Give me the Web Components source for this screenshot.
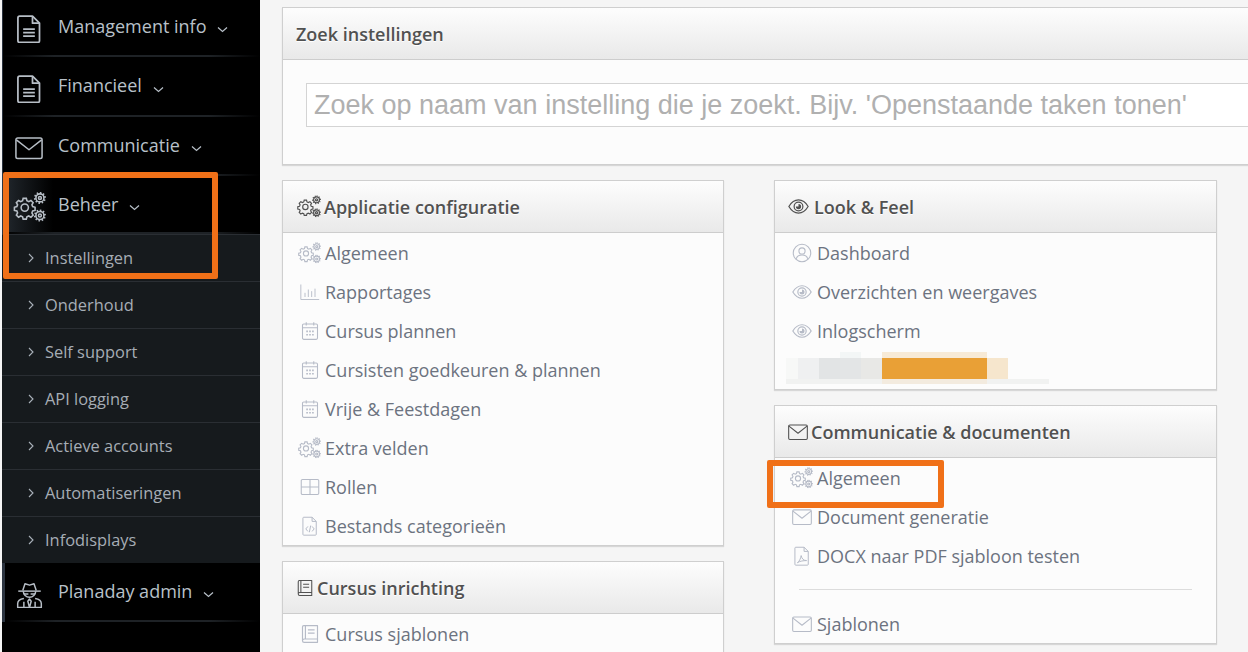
<!DOCTYPE html>
<html><head><meta charset="utf-8">
<style>
html,body{margin:0;padding:0;width:1248px;height:652px;overflow:hidden;background:#f5f5f5;font-family:"Open Sans",sans-serif}
</style></head><body>
<app-shell></app-shell>
<script>
const ICONS={
gears:`<g fill="none" stroke="currentColor" stroke-width="1.300"><path d="M9.200 5.400h2.600l.5 2 1.500.7 1.800-1 1.800 1.800-1 1.800.6 1.500 2 .5v2.600l-2 .5-.6 1.500 1 1.800-1.800 1.800-1.800-1-1.500.6-.5 2H9.200l-.5-2-1.500-.6-1.800 1-1.800-1.800 1-1.800-.6-1.500-2-.5v-2.600l2-.5.6-1.500-1-1.800 1.800-1.800 1.800 1 1.500-.7z"/><circle cx="10.500" cy="13" r="3"/><circle cx="23" cy="5" r="3.300"/><circle cx="23" cy="5" r="1.200"/><circle cx="23" cy="19.500" r="3.300"/><circle cx="23" cy="19.500" r="1.200"/><path stroke-dasharray="1.200 1.400" stroke-width="1.500" d="M23 .8a4.200 4.200 0 1 1-.01 0zM23 15.300a4.200 4.200 0 1 1-.01 0z"/></g>`,
doc:`<g fill="none" stroke="currentColor" stroke-width="1.500" stroke-linejoin="round"><path d="M4 1h11l6 6v15a1.500 1.500 0 0 1-1.500 1.500h-15.500A1.500 1.500 0 0 1 2.500 22V2.500A1.500 1.500 0 0 1 4 1z"/><path d="M15 1v6h6"/><path d="M7 12h10M7 15h10M7 18h10"/></g>`,
mail:`<g fill="none" stroke="currentColor" stroke-width="1.300" stroke-linejoin="round"><rect x=".8" y="3.500" width="22.400" height="17.500" rx="1.500"/><path d="M1.200 5l10.800 8.500L22.800 5"/></g>`,
spy:`<g fill="none" stroke="currentColor" stroke-width="1.300" stroke-linejoin="round"><path d="M6 8.500l2-6 4 1.200L16 2.500l2 6"/><path d="M2 9h20"/><path d="M6.500 9a5.500 5.500 0 0 0 11 0"/><path d="M7 11.500h4M13 11.500h4"/><path d="M7 15.500c-3 .5-5.500 2-5.500 4.500v3.500h21V20c0-2.500-2.500-4-5.500-4.500"/><path d="M12 16l-1.500 2 1.500 5.500 1.500-5.500z"/><path d="M7 18.500v5M17 18.500v5"/></g>`,
bars:`<g fill="none" stroke="currentColor" stroke-width="1.100"><path d="M1 3v18h22M6 18v-5M10 18V9M14 18v-7M18 18V8"/></g>`,
cal:`<g fill="none" stroke="currentColor" stroke-width="1.300"><rect x="3" y="3.500" width="18" height="18.500" rx="1.500"/><path d="M3 8h18M7.500 1.500v4M16.500 1.500v4"/><path stroke-width="2" stroke-dasharray="2 1.500" d="M7.500 12.500h9M7.500 16.500h9"/></g>`,
grid:`<g fill="none" stroke="currentColor" stroke-width="1.300"><rect x="1.500" y="3" width="21" height="18" rx="1.500"/><path d="M12 3v18M1.500 12h21"/></g>`,
code:`<g fill="none" stroke="currentColor" stroke-width="1.200" stroke-linejoin="round"><path d="M4.500 1.500h10l5 5V22a1 1 0 0 1-1 1h-14a1 1 0 0 1-1-1V2.500a1 1 0 0 1 1-1z"/><path d="M14.500 1.500v5h5M9.500 12.500l-2.500 3 2.500 3M14.500 12.500l2.500 3-2.500 3M12.800 11.500l-1.600 8"/></g>`,
pdf:`<g fill="none" stroke="currentColor" stroke-width="1.200" stroke-linejoin="round"><path d="M4.500 1.500h10l5 5V22a1 1 0 0 1-1 1h-14a1 1 0 0 1-1-1V2.500a1 1 0 0 1 1-1z"/><path d="M14.500 1.500v5h5M6.500 20c2-1 4-5 4.500-8.500.8 4 3 6 6.500 6-3.500 0-8 .5-11 2.500z"/></g>`,
book:`<g fill="none" stroke="currentColor" stroke-width="1.400" stroke-linejoin="round"><path d="M3 20V3.500a1.500 1.500 0 0 1 1.500-1.500H21v16H5a2 2 0 0 0-2 2 2 2 0 0 0 2 2h16v-4"/><path d="M6.500 2v16M9.500 7h8M9.500 11h8"/></g>`,
eye:`<g fill="none" stroke="currentColor" stroke-width="1.400"><path d="M1 12c3-5 7-7.500 11-7.500S20 7 23 12c-3 5-7 7.500-11 7.500S4 17 1 12z"/><circle cx="12" cy="12" r="5"/><path fill="currentColor" stroke="none" d="M12 9a3 3 0 1 1-3 3h3z"/></g>`,
user:`<g fill="none" stroke="currentColor" stroke-width="1.300"><circle cx="12" cy="12" r="10.500"/><circle cx="12" cy="9.500" r="3.700"/><path d="M5 19c1-3 3.500-4.500 7-4.500s6 1.500 7 4.500"/></g>`
};
const icon=(n,w=24,vb='0 0 24 24')=>`<svg viewBox="${vb}" width="${w}" height="${w}" aria-hidden="true">${ICONS[n]}</svg>`;
const GV='0 0 28 25';

class NavItem extends HTMLElement{
  constructor(){super();const s=this.attachShadow({mode:'open'});
    const n=this.getAttribute('icon'),sz=+(this.getAttribute('size')||28),vb=n==='gears'?GV:'0 0 24 24';
    const glow=this.hasAttribute('glow')?'background:linear-gradient(90deg,#22282e,#000 50px);':'';
    const edge=this.getAttribute('edge')||'1px';
    s.innerHTML=`<style>
    :host{display:flex;align-items:center;height:59px;box-sizing:border-box;background:#000;color:#b8c0c9;position:relative;${glow}border-left:${edge} solid #2c3440}
    :host::after{content:"";position:absolute;left:0;right:0;bottom:0;height:2px;background:linear-gradient(90deg,#000,#1e2226 20%,#1e2226 80%,#000)}
    .i{width:52px;margin-right:3px;flex:none;display:flex;justify-content:center;margin-left:calc(1px - ${edge});padding-top:3px;color:#b7bec6}
    .t{font-size:18px;position:relative;top:-2px}
    svg.c{margin-left:11px;position:relative;top:2px}
    </style><span class="i">${icon(n,sz,vb)}</span><span class="t"><slot></slot></span><svg class="c" width="11" height="7" viewBox="0 0 11 7"><path d="M1 1.500l4.500 4 4.500-4" fill="none" stroke="#b8c0c9" stroke-width="1.200"/></svg>`;}
}
class NavSub extends HTMLElement{
  constructor(){super();this.attachShadow({mode:'open'}).innerHTML=`<style>
    :host{display:flex;align-items:center;height:47px;box-sizing:border-box;background:#161a1d;border-top:1px solid #2a2e33;color:#a6adb5;font-size:16.400px}
    svg{margin:0 11px 0 26px}
    span{position:relative;top:-1px}
    </style><svg width="6" height="10" viewBox="0 0 6 10"><path d="M1 1l4 4-4 4" fill="none" stroke="#a9b1ba" stroke-width="1.100"/></svg><span><slot></slot></span>`;}
}
class SideBar extends HTMLElement{
  constructor(){super();this.attachShadow({mode:'open'}).innerHTML=`<style>
    :host{display:block;width:258px;height:652px;margin-left:2px;background:#000;flex:none;overflow:hidden}
    .w{margin-top:-2px}
    </style><div class="w"><slot></slot></div>`;}
}
class SetPanel extends HTMLElement{
  constructor(){super();const n=this.getAttribute('icon'),sz=this.getAttribute('size')||22,g=this.getAttribute('gap')||3;
    this.attachShadow({mode:'open'}).innerHTML=`<style>
    :host{display:block;background:#fcfcfc;border:1px solid #cfcfcf;box-shadow:0 1px 1px rgba(0,0,0,.12);box-sizing:border-box;color:#555}
    header{height:52px;box-sizing:border-box;display:flex;align-items:center;padding-left:13px;gap:${g}px;background:linear-gradient(#fdfdfd,#e9e9e9);border-bottom:1px solid #cdcdcd;font-size:18px;font-weight:600;color:#515151;text-shadow:0 1px 0 #fff}
    svg{flex:none}
    </style><header>${n?icon(n,sz,n==='gears'?GV:'0 0 24 24'):''}<span>${this.getAttribute('title-text')}</span></header><div class="b"><slot></slot></div>`;}
}
class SetRow extends HTMLElement{
  constructor(){super();const n=this.getAttribute('icon'),vb=n==='gears'?GV:'0 0 24 24',g=n==='gears';
    this.attachShadow({mode:'open'}).innerHTML=`<style>
    :host{display:flex;align-items:center;height:39px;font-size:18px;color:#6c7380;box-sizing:border-box}
    .i{width:42px;flex:none;display:flex;justify-content:flex-end;padding-right:${g?4:5}px;box-sizing:border-box;color:#b6bbc7}
    </style><span class="i">${icon(n,g?24:20,vb)}</span><span><slot></slot></span>`;}
}
class SearchBox extends HTMLElement{
  constructor(){super();this.attachShadow({mode:'open'}).innerHTML=`<style>
    :host{display:block;padding:23px 0 37px 23px}
    input{display:block;width:1000px;height:44px;box-sizing:border-box;border:1px solid #d4d4d4;background:#fff;padding:0 7px;font:27px "Liberation Sans",sans-serif;outline:0}
    input::placeholder{color:#b0b0b0;opacity:1}
    </style><input placeholder="Zoek op naam van instelling die je zoekt. Bijv. 'Openstaande taken tonen'">`;}
}
class BlurRow extends HTMLElement{
  constructor(){super();this.attachShadow({mode:'open'}).innerHTML=`<style>
    :host{display:block;height:37px}
    .t{height:6px;margin:2px 0 0 107px;width:105px;background:#f7ead6;position:relative}
    .t::before{content:"";position:absolute;left:-42px;top:0;width:21px;height:6px;background:#f3f6f6}
    .r{display:flex;height:21px;margin-left:11px}
    .r i{display:block;height:21px}
    .l{height:5px;margin-left:11px;width:263px;background:#f1f2f1;position:relative}
    .l::before{content:"";position:absolute;left:96px;top:0;width:105px;height:5px;background:#f3ebdf}
    </style><div class="t"></div><div class="r"><i style="width:12px;background:#f7f8f7"></i><i style="width:21px;background:#eff0f1"></i><i style="width:21px;background:#e2e4e5"></i><i style="width:21px;background:#e3e5e6"></i><i style="width:21px;background:#e8e8e6"></i><i style="width:105px;background:#e9a036"></i><i style="width:21px;background:#f6e6cd"></i></div><div class="l"></div>`;}
}
class NoteBox extends HTMLElement{
  constructor(){super();this.attachShadow({mode:'open'}).innerHTML=`<style>
    :host{display:block;position:absolute;box-sizing:border-box;border:6px solid #f07018;border-radius:2px;pointer-events:none}
    </style>`;}
}
class AppShell extends HTMLElement{
  constructor(){super();this.attachShadow({mode:'open'}).innerHTML=`<style>
    :host{display:flex;width:1248px;height:652px;position:relative;overflow:hidden}
    main{flex:1;min-width:0;padding:7px 0 0 22px;overflow:hidden;background:#f5f5f5}
    .search{width:1000px;margin-bottom:15px}
    .cols{display:grid;grid-template-columns:442px 443px;column-gap:50px;align-items:start}
    .col{display:flex;flex-direction:column;gap:15px}
    hr{border:0;border-top:1px solid #dcdcdc;margin:14px 24px}
    </style>
    <side-bar>
      <nav-item icon="doc">Management info</nav-item>
      <nav-item icon="doc" style="height:60px">Financieel</nav-item>
      <nav-item icon="mail">Communicatie</nav-item>
      <nav-item icon="gears" size="34" glow style="height:58px;padding-top:1px">Beheer</nav-item>
      <nav-sub>Instellingen</nav-sub><nav-sub>Onderhoud</nav-sub><nav-sub>Self support</nav-sub><nav-sub>API logging</nav-sub><nav-sub>Actieve accounts</nav-sub><nav-sub>Automatiseringen</nav-sub><nav-sub>Infodisplays</nav-sub>
      <nav-item icon="spy" size="27" edge="3px">Planaday admin</nav-item>
    </side-bar>
    <main>
      <set-panel class="search" title-text="Zoek instellingen"><search-box></search-box></set-panel>
      <div class="cols">
        <div class="col">
          <set-panel icon="gears" size="25" title-text="Applicatie configuratie">
            <set-row icon="gears">Algemeen</set-row><set-row icon="bars">Rapportages</set-row><set-row icon="cal">Cursus plannen</set-row><set-row icon="cal">Cursisten goedkeuren &amp; plannen</set-row><set-row icon="cal">Vrije &amp; Feestdagen</set-row><set-row icon="gears">Extra velden</set-row><set-row icon="grid">Rollen</set-row><set-row icon="code">Bestands categorieën</set-row>
          </set-panel>
          <set-panel icon="book" size="18" title-text="Cursus inrichting">
            <set-row icon="book">Cursus sjablonen</set-row>
          </set-panel>
        </div>
        <div class="col">
          <set-panel icon="eye" size="21" gap="5" title-text="Look &amp; Feel">
            <set-row icon="user">Dashboard</set-row><set-row icon="eye">Overzichten en weergaves</set-row><set-row icon="eye">Inlogscherm</set-row><blur-row></blur-row>
          </set-panel>
          <set-panel icon="mail" size="20" title-text="Communicatie &amp; documenten">
            <set-row icon="gears">Algemeen</set-row><set-row icon="mail">Document generatie</set-row><set-row icon="pdf">DOCX naar PDF sjabloon testen</set-row><hr><set-row icon="mail">Sjablonen</set-row>
          </set-panel>
        </div>
      </div>
    </main>
    <note-box style="left:3px;top:172px;width:215px;height:107px"></note-box>
    <note-box style="left:767px;top:460px;width:177px;height:48px"></note-box>`;}
}
customElements.define('nav-item',NavItem);customElements.define('nav-sub',NavSub);customElements.define('side-bar',SideBar);
customElements.define('set-panel',SetPanel);customElements.define('set-row',SetRow);customElements.define('search-box',SearchBox);
customElements.define('blur-row',BlurRow);customElements.define('note-box',NoteBox);customElements.define('app-shell',AppShell);
</script></body></html>
